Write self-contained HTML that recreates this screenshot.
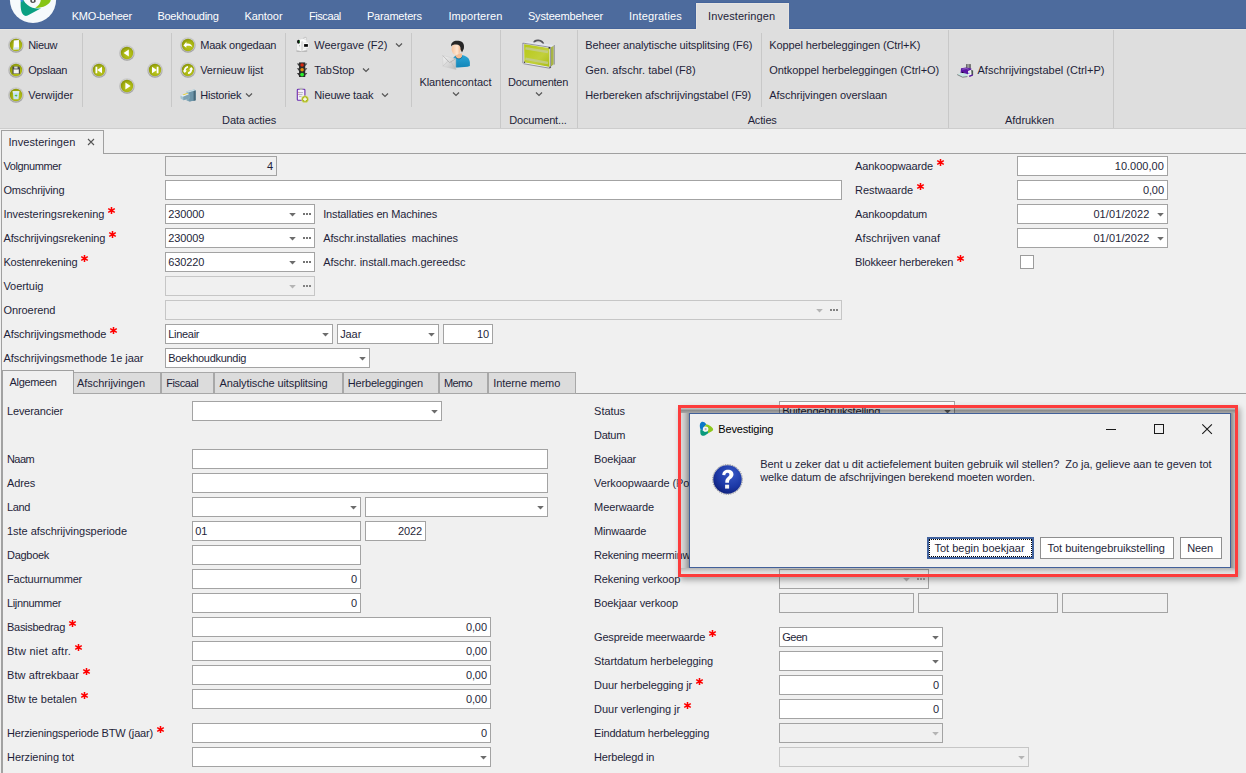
<!DOCTYPE html>
<html><head><meta charset="utf-8"><title>Investeringen</title><style>
html,body{margin:0;padding:0}
body{width:1246px;height:773px;position:relative;overflow:hidden;background:#f0f0f0;font-family:"Liberation Sans",sans-serif;font-size:11px;color:#1f1f3a}
.b{position:absolute;box-sizing:border-box;display:block}
.t{position:absolute;white-space:pre;line-height:14px;font-size:11px;font-family:"Liberation Sans",sans-serif}
</style></head><body>
<div class="b" style="left:0px;top:0px;width:1246px;height:29px;background:#4d6b9d;"></div>
<svg class="b" style="left:0;top:0" width="70" height="29" viewBox="0 0 70 29">
<circle cx="33" cy="-0.1" r="23.1" fill="#f6fafc"/>
<path d="M20.8 0C20.5 4 20.6 8 21.3 11C22.2 14.8 24.8 16.9 27.6 15.5L41.1 8.3C38 8.7 35 8.6 32.4 7.8C28.8 6.6 25.4 3.8 23.4 0Z" fill="#0aa082"/>
<path d="M35.2 7.8C38 8.2 42 7.6 45.6 5.8C48.4 4.4 50.4 2.2 50.8 0H40.8C40.6 3.2 38.4 6 35.2 7.8Z" fill="#86c414"/>
<path d="M20.6 0H23C22.6 0.9 22.4 1.7 22.4 2.6C21.4 2 20.8 1 20.6 0Z" fill="#3a8ee6"/>
<path d="M30.3 0H35.6V1.6C35.2 2.6 34.2 3 33 3C31.4 3 30.3 2.2 30.3 0.8Z" fill="#4a4a4a"/>
<path d="M31.9 0H34V1.2C33.6 1.7 33.2 1.8 32.7 1.8C32.2 1.8 31.9 1.5 31.9 1Z" fill="#f0f4f6"/>
</svg>
<div class="b" style="left:0px;top:28px;width:1246px;height:1px;background:#45649a;"></div>
<div class="b" style="left:0px;top:29px;width:1246px;height:99px;background:#dedede;"></div>
<div class="b" style="left:0px;top:29px;width:1246px;height:1px;background:#e6e4e1;"></div>
<div class="b" style="left:0px;top:128px;width:1246px;height:1px;background:#cdcdcd;"></div>
<div class="b" style="left:695px;top:3px;width:1px;height:26px;background:#45649a;"></div>
<div class="b" style="left:696px;top:2px;width:93px;height:1px;background:#45649a;"></div>
<div class="b" style="left:696px;top:3px;width:93px;height:27px;background:#dedede;border:1px solid #e6e4e1;border-bottom:none;"></div>
<span class="t" style="top:9px;letter-spacing:-0.297px;left:71.8px;color:#fff;">KMO-beheer</span>
<span class="t" style="top:9px;letter-spacing:-0.293px;left:157.5px;color:#fff;">Boekhouding</span>
<span class="t" style="top:9px;letter-spacing:-0.075px;left:244.5px;color:#fff;">Kantoor</span>
<span class="t" style="top:9px;letter-spacing:-0.406px;left:308.9px;color:#fff;">Fiscaal</span>
<span class="t" style="top:9px;letter-spacing:-0.185px;left:366.9px;color:#fff;">Parameters</span>
<span class="t" style="top:9px;letter-spacing:0.081px;left:448.4px;color:#fff;">Importeren</span>
<span class="t" style="top:9px;letter-spacing:-0.157px;left:527.9px;color:#fff;">Systeembeheer</span>
<span class="t" style="top:9px;letter-spacing:0.149px;left:629.0px;color:#fff;">Integraties</span>
<span class="t" style="top:9px;letter-spacing:0.074px;left:708.1px;">Investeringen</span>
<div class="b" style="left:82px;top:33px;width:1px;height:74px;background:#c8c8c8;"></div>
<div class="b" style="left:171px;top:33px;width:1px;height:74px;background:#c8c8c8;"></div>
<div class="b" style="left:285px;top:33px;width:1px;height:74px;background:#c8c8c8;"></div>
<div class="b" style="left:411px;top:33px;width:1px;height:74px;background:#c8c8c8;"></div>
<div class="b" style="left:761px;top:33px;width:1px;height:74px;background:#c8c8c8;"></div>
<div class="b" style="left:500px;top:30px;width:1px;height:98px;background:#c8c8c8;"></div>
<div class="b" style="left:577px;top:30px;width:1px;height:98px;background:#c8c8c8;"></div>
<div class="b" style="left:948px;top:30px;width:1px;height:98px;background:#c8c8c8;"></div>
<div class="b" style="left:1113px;top:30px;width:1px;height:98px;background:#c8c8c8;"></div>
<svg class="b" style="left:0;top:0" width="1246" height="130" viewBox="0 0 1246 130"><defs>
<radialGradient id="ol" cx="0.58" cy="0.62" r="0.62"><stop offset="0" stop-color="#bcc820"/><stop offset="0.6" stop-color="#a8b412"/><stop offset="1" stop-color="#8a960a"/></radialGradient>
<linearGradient id="rg" x1="0" y1="0" x2="0" y2="1"><stop offset="0" stop-color="#cacaca"/><stop offset="0.5" stop-color="#bcbcbc"/><stop offset="1" stop-color="#9e9e9e"/></linearGradient>
<linearGradient id="sk" x1="0" y1="0" x2="1" y2="0"><stop offset="0" stop-color="#f7c29c"/><stop offset="0.6" stop-color="#fde6d2"/><stop offset="1" stop-color="#f2b48a"/></linearGradient>
<linearGradient id="sh" x1="0" y1="0" x2="0" y2="1"><stop offset="0" stop-color="#2aa6d8"/><stop offset="1" stop-color="#1486b8"/></linearGradient>
<linearGradient id="env" x1="0" y1="0" x2="1" y2="1"><stop offset="0" stop-color="#f4f4f4"/><stop offset="1" stop-color="#bcbcbc"/></linearGradient>
<linearGradient id="cs" x1="0" y1="0" x2="1" y2="1"><stop offset="0" stop-color="#b6c814"/><stop offset="0.6" stop-color="#c2d03a"/><stop offset="1" stop-color="#a8ba10"/></linearGradient>
<linearGradient id="cab" x1="0" y1="0" x2="1" y2="1"><stop offset="0" stop-color="#a8ccd8"/><stop offset="1" stop-color="#5c8498"/></linearGradient>
</defs>
<g transform="translate(16 45)"><circle r="7.8" fill="url(#rg)"/><circle r="6.7" fill="#d8d8d8" opacity="0.55"/><circle r="6.2" fill="url(#ol)"/><path d="M-2.2 -4.6L2.9 -5L3.1 4.2L-2.6 4.6Z" fill="#fafcff"/><path d="M-2.5 2.6L3.05 2.3L3.1 4.2L-2.6 4.6Z" fill="#cfe3f2"/></g>
<g transform="translate(16 70)"><circle r="7.8" fill="url(#rg)"/><circle r="6.7" fill="#d8d8d8" opacity="0.55"/><circle r="6.2" fill="url(#ol)"/><path d="M-3.6 -3.4H3L4 -2.4V3.8H-3.6Z" fill="#4a4a4a"/><rect x="-2.4" y="-0.6" width="5.2" height="4" fill="#f4f4f4"/><rect x="-1.8" y="-3.4" width="3.4" height="2" fill="#d8d8d8"/></g>
<g transform="translate(16 95)"><circle r="7.8" fill="url(#rg)"/><circle r="6.7" fill="#d8d8d8" opacity="0.55"/><circle r="6.2" fill="url(#ol)"/><path d="M-3.2 -3.6H3.2L2.5 4.2H-2.5Z" fill="#c6e4f4"/><path d="M-3.4 -3.8H3.4V-2.6H-3.4Z" fill="#e8f4fb"/><path d="M-0.2 -0.8L1.6 0.6L-0.2 2V1.1H-1.2V0.1H-0.2Z" fill="#58c038"/></g>
<g transform="translate(127 53)"><circle r="7.8" fill="url(#rg)"/><circle r="6.7" fill="#d8d8d8" opacity="0.55"/><circle r="6.2" fill="url(#ol)"/><path d="M-3.4 0L1.8 -3.4V3.4Z" fill="#fff"/></g>
<g transform="translate(127 86)"><circle r="7.8" fill="url(#rg)"/><circle r="6.7" fill="#d8d8d8" opacity="0.55"/><circle r="6.2" fill="url(#ol)"/><path d="M3.6 0L-1.6 -3.4V3.4Z" fill="#fff"/></g>
<g transform="translate(99 70)"><circle r="7.8" fill="url(#rg)"/><circle r="6.7" fill="#d8d8d8" opacity="0.55"/><circle r="6.2" fill="url(#ol)"/><path d="M-3.5 -3.3H-1.7V3.3H-3.5Z" fill="#fff"/><path d="M-1.9 0L3 -3.3V3.3Z" fill="#fff"/></g>
<g transform="translate(155 70)"><circle r="7.8" fill="url(#rg)"/><circle r="6.7" fill="#d8d8d8" opacity="0.55"/><circle r="6.2" fill="url(#ol)"/><path d="M3.5 -3.3H1.7V3.3H3.5Z" fill="#fff"/><path d="M1.9 0L-3 -3.3V3.3Z" fill="#fff"/></g>
<g transform="translate(188 45)"><circle r="7.8" fill="url(#rg)"/><circle r="6.7" fill="#d8d8d8" opacity="0.55"/><circle r="6.2" fill="url(#ol)"/><path d="M-4.6 0.4L-1.6 -3.2V-1.5C1.6 -2 4 -0.4 4.4 2.4C3 0.9 1 0.6 -1.6 1V2.8Z" fill="#fff"/></g>
<g transform="translate(188 70)"><circle r="7.8" fill="url(#rg)"/><circle r="6.7" fill="#d8d8d8" opacity="0.55"/><circle r="6.2" fill="url(#ol)"/><path d="M-4.2 0.6C-4.2 -2 -2.4 -3.9 0 -4.1V-2.3C-1.3 -2.1 -2.3 -1 -2.3 0.4H-1L-3.2 3L-5.4 0.6Z" fill="#fff"/><path d="M4.2 -0.6C4.2 2 2.4 3.9 0 4.1V2.3C1.3 2.1 2.3 1 2.3 -0.4H1L3.2 -3L5.4 -0.6Z" fill="#fff"/></g>
<g>
<path d="M186.5 91.2L194.4 89.6L195.6 90.6V100.2L189.4 101.6L186.5 100.4Z" fill="url(#cab)"/>
<path d="M186.5 91.2L194.4 89.6L195.6 90.6L188.6 92.4Z" fill="#c4dce6"/>
<path d="M188.6 92.4L195.6 90.6V100.2L189.4 101.6Z" fill="#6c94a8"/><path d="M193.6 91.1L195.6 90.6V100.2L193.6 100.7Z" fill="#47687a"/>
<path d="M180.4 95.8L186.8 93.2L189.2 94.2L189.4 98.6L183.4 100.2L180.6 98.4Z" fill="#a4c4d2"/>
<path d="M180.4 95.8L186.8 93.2L189.2 94.2L183.2 96.8Z" fill="#e6eef2"/>
<path d="M182.6 94.6L187.2 92.9L188.3 93.4L183.8 95.3Z" fill="#e8d040"/>
<path d="M183.2 96.8L189.2 94.2L189.4 98.6L183.4 100.2Z" fill="#7ea2b4"/>
</g>
<g>
<ellipse cx="301.8" cy="50.9" rx="5.6" ry="0.9" fill="#adadad"/>
<path d="M302.6 40.2C302.8 37.4 304.6 36.5 306 37C307.1 37.4 307.3 39 306.9 40.6Z" fill="#c9c9c9"/>
<path d="M303.6 39.6C303.9 38.2 305 37.7 305.8 38C306.4 38.3 306.4 39.2 306.2 40Z" fill="#ededed"/>
<path d="M297 39.7L303.4 38.8L306.7 40.2V50L301.6 51.2L297 50.2Z" fill="#fbfbfb" stroke="#cdcdcd" stroke-width="0.35"/>
<path d="M301.3 41.4L302.7 41.1V50.6L301.3 50.9Z" fill="#d2d2d2"/>
<path d="M297.2 44.6L301 44.2V49.9L297.2 49.4Z" fill="#f4f4f4"/>
<path d="M299.1 45L299.8 45V46.4L299.1 46.2Z" fill="#a8a8a8"/>
<path d="M303.2 42.7L308.8 42.3V47.9L303.2 48.2Z" fill="#ffffff" stroke="#c6c6c6" stroke-width="0.3"/>
<path d="M304.1 44.1H307.9V46.8H304.1Z" fill="#060606"/>
<ellipse cx="298.5" cy="41.7" rx="1.5" ry="2" fill="#0c0c0c"/>
<ellipse cx="299.3" cy="41.7" rx="0.5" ry="1.3" fill="#1e8a2a"/>
</g>
<g>
<path d="M299 62.4H305.2V77H299Z" fill="#2c2c2c"/>
<path d="M296.9 63.4H299V66.2Z M296.9 68.2H299V71Z M296.9 73H299V75.8Z M307.3 63.4H305.2V66.2Z M307.3 68.2H305.2V71Z M307.3 73H305.2V75.8Z" fill="#3a3a3a"/>
<circle cx="302.1" cy="65.1" r="1.75" fill="#d82a10"/>
<circle cx="302.1" cy="69.8" r="1.75" fill="#e89010"/>
<circle cx="302.1" cy="74.6" r="1.9" fill="#2cf02c"/>
</g>
<g>
<rect x="297.3" y="89.2" width="7.6" height="11" rx="0.8" fill="#f4f0fa" stroke="#6a2cb0" stroke-width="1.1"/>
<rect x="299.6" y="87.8" width="3" height="2.2" fill="#b8b8b8"/>
<path d="M299 92.6H303M299 94.6H302.4M299 96.6H301.6" stroke="#9a9aa8" stroke-width="0.7"/>
<path d="M298.3 92.4h0.8M298.3 94.4h0.8" stroke="#d03030" stroke-width="0.7"/>
<circle cx="305" cy="99.2" r="3.5" fill="#aab616" stroke="#dfe6a0" stroke-width="0.6"/>
<path d="M303 99.2H307M305 97.2V101.2" stroke="#fff" stroke-width="1.3"/>
</g>
<g>
<path d="M451.2 67C451 61.5 452.6 56 457 55.2L461.4 55C466 55.6 469.6 58 469.9 62.5V66C466 67.6 455 67.8 451.2 67Z" fill="url(#sh)"/>
<path d="M455.6 53.4H462V56.6C461 59.2 457.4 59.4 455.6 57Z" fill="#f4bc94"/>
<path d="M455.3 56.4C456.8 59.6 460.6 59.8 462.3 56.6" fill="none" stroke="#0e5c80" stroke-width="0.7"/>
<ellipse cx="456.2" cy="49.3" rx="4.6" ry="5.7" fill="url(#sk)"/>
<path d="M451.1 46.6C450.6 42 454.6 40.2 458.4 40.8C462.6 41 464.6 44 463.9 48.2C463.6 49.6 462.8 50.2 462 52.6L460.6 49.6C460.8 46.4 459.2 44.6 456 44.6C453.6 44.6 452 45.2 451.1 46.6Z" fill="#262626"/>
<path d="M442.8 55.6L455.8 58.8V69.6L443 66.2Z" fill="url(#env)" stroke="#c8c8c8" stroke-width="0.4"/>
<path d="M442.8 55.6L449.6 62.6L455.8 58.8" fill="none" stroke="#a8a8a8" stroke-width="0.7"/>
<path d="M443 66.2L448 61.2M455.8 69.6L451 61.8" stroke="#b8b8b8" stroke-width="0.5"/>
</g>
<g>
<path d="M533.6 43.8C534 40.8 535.6 40.2 538.4 40.4C541.6 40.6 543 41.8 543.5 44.8" fill="none" stroke="#55555c" stroke-width="1.9"/>
<path d="M550.1 47.5L554 45.1V64.5L550.1 67.6Z" fill="#a9b644" stroke="#dcdce6" stroke-width="0.8"/>
<path d="M523.4 43.3L527.6 41.4L554 45.1L550.1 47.5Z" fill="#e4e6ee"/>
<path d="M523.4 43.3L550.1 47.5V67.6L523.7 63Z" fill="url(#cs)" stroke="#e8e8f2" stroke-width="1.4" stroke-linejoin="round"/>
<path d="M522.8 43.1L550.4 47.3M550.6 47.2V68M522.9 43V63.2M523.4 63.7L550.2 68.3" stroke="#5c5c6a" stroke-width="0.6" fill="none"/>
<path d="M525.4 48.2L548 52M525.4 58.8L548 63" stroke="#c4cc8c" stroke-width="2.6" opacity="0.85"/>
<path d="M554.3 45V64.6" stroke="#5c5c6a" stroke-width="0.6"/>
<circle cx="549.3" cy="47.8" r="0.9" fill="#2a2a30"/><circle cx="524.5" cy="62.2" r="0.7" fill="#3a3a40"/><circle cx="550" cy="67.3" r="0.8" fill="#3a3a40"/>
</g>
<g>
<path d="M966 64.1H970.9V68.6H966Z" fill="#6a6a6a"/>
<path d="M967.2 64.1H969.2V68.6H967.2Z" fill="#9a9a9a"/>
<path d="M961 68.2L966 67.4L971.4 68.4L971.2 70.6L968 74.2L960.6 73Z" fill="#5a16a2"/>
<path d="M962.4 69.2L966.2 68.6L968.6 69.2" stroke="#b8a0dc" stroke-width="0.6" fill="none"/>
<path d="M968 71L971.6 69.4L973.1 70.6V75L968.6 76.8L968 76Z" fill="#eef0f0"/>
<path d="M971.2 69.8L973.1 70.6V75L971.6 75.6Z" fill="#4a5a50"/>
<path d="M968.6 75.8L973 74.2V75.6L969.6 76.9Z" fill="#5a16a2"/>
<path d="M968.2 72.8H969.4V73.8H968.2Z" fill="#3a5ae0"/>
<path d="M957.2 74.4L961.6 72.8L967.2 74L967.4 76.4L962.6 77.2Z" fill="#c6e6e4"/>
<path d="M957.2 74.6L962.6 77.2L967.4 76.6" stroke="#5a5a5a" stroke-width="0.7" fill="none"/>
<ellipse cx="962.6" cy="72.3" rx="1" ry="0.6" fill="#14082a"/>
</g></svg>
<span class="t" style="top:38px;letter-spacing:-0.313px;left:28.2px;">Nieuw</span>
<span class="t" style="top:63px;letter-spacing:-0.281px;left:28.2px;">Opslaan</span>
<span class="t" style="top:88px;letter-spacing:-0.027px;left:28.2px;">Verwijder</span>
<span class="t" style="top:38px;letter-spacing:-0.222px;left:200.2px;">Maak ongedaan</span>
<span class="t" style="top:63px;letter-spacing:-0.085px;left:200.2px;">Vernieuw lijst</span>
<span class="t" style="top:88px;letter-spacing:-0.198px;left:200.2px;">Historiek</span>
<svg class="b" style="left:245px;top:92px" width="8" height="6" viewBox="-4 -3 8 6"><path d="M-3 -1.5L0 1.5L3 -1.5" fill="none" stroke="#555" stroke-width="1.2"/></svg>
<span class="t" style="top:38px;letter-spacing:-0.012px;left:314.3px;">Weergave (F2)</span>
<svg class="b" style="left:395px;top:42px" width="8" height="6" viewBox="-4 -3 8 6"><path d="M-3 -1.5L0 1.5L3 -1.5" fill="none" stroke="#555" stroke-width="1.2"/></svg>
<span class="t" style="top:63px;letter-spacing:-0.052px;left:314.3px;">TabStop</span>
<svg class="b" style="left:361.6px;top:67px" width="8" height="6" viewBox="-4 -3 8 6"><path d="M-3 -1.5L0 1.5L3 -1.5" fill="none" stroke="#555" stroke-width="1.2"/></svg>
<span class="t" style="top:88px;letter-spacing:-0.139px;left:314.3px;">Nieuwe taak</span>
<svg class="b" style="left:381px;top:92px" width="8" height="6" viewBox="-4 -3 8 6"><path d="M-3 -1.5L0 1.5L3 -1.5" fill="none" stroke="#555" stroke-width="1.2"/></svg>
<span class="t" style="top:75px;letter-spacing:-0.055px;left:419.4px;">Klantencontact</span>
<svg class="b" style="left:451.9px;top:91px" width="8" height="6" viewBox="-4 -3 8 6"><path d="M-3 -1.5L0 1.5L3 -1.5" fill="none" stroke="#555" stroke-width="1.2"/></svg>
<span class="t" style="top:75px;letter-spacing:-0.237px;left:508.1px;">Documenten</span>
<svg class="b" style="left:534.9px;top:91px" width="8" height="6" viewBox="-4 -3 8 6"><path d="M-3 -1.5L0 1.5L3 -1.5" fill="none" stroke="#555" stroke-width="1.2"/></svg>
<span class="t" style="top:38px;letter-spacing:-0.116px;left:585.2px;">Beheer analytische uitsplitsing (F6)</span>
<span class="t" style="top:63px;letter-spacing:0.046px;left:585.2px;">Gen. afschr. tabel (F8)</span>
<span class="t" style="top:88px;letter-spacing:-0.062px;left:585.2px;">Herbereken afschrijvingstabel (F9)</span>
<span class="t" style="top:38px;letter-spacing:-0.113px;left:769.2px;">Koppel herbeleggingen (Ctrl+K)</span>
<span class="t" style="top:63px;letter-spacing:-0.046px;left:769.2px;">Ontkoppel herbeleggingen (Ctrl+O)</span>
<span class="t" style="top:88px;letter-spacing:-0.051px;left:769.2px;">Afschrijvingen overslaan</span>
<span class="t" style="top:63px;letter-spacing:0.006px;left:977.5px;">Afschrijvingstabel (Ctrl+P)</span>
<span class="t" style="top:113px;letter-spacing:-0.093px;left:222.1px;">Data acties</span>
<span class="t" style="top:113px;letter-spacing:-0.164px;left:509.2px;">Document...</span>
<span class="t" style="top:113px;letter-spacing:-0.159px;left:747.7px;">Acties</span>
<span class="t" style="top:113px;letter-spacing:-0.058px;left:1005.1px;">Afdrukken</span>
<div class="b" style="left:103px;top:153px;width:1143px;height:1px;background:#a0a0a0;"></div>
<div class="b" style="left:1px;top:130px;width:103px;height:24px;background:#f0f0f0;border:1px solid #a0a0a0;border-bottom:none;"></div>
<div class="b" style="left:1px;top:153px;width:1px;height:620px;background:#a0a0a0;"></div>
<span class="t" style="top:135px;letter-spacing:0.074px;left:8.4px;">Investeringen</span>
<svg class="b" style="left:87px;top:138px" width="8" height="8" viewBox="0 0 8 8"><path d="M1 1L7 7M7 1L1 7" stroke="#555" stroke-width="1.1" fill="none"/></svg>
<span class="t" style="top:159px;letter-spacing:-0.375px;left:3.4px;">Volgnummer</span>
<div class="b" style="left:165px;top:156px;width:112px;height:20px;background:#f0f0f0;border:1px solid #a3a3a3;"></div>
<span class="t" style="top:159px;letter-spacing:-0.117px;right:973.1px;">4</span>
<span class="t" style="top:183px;letter-spacing:-0.214px;left:3.4px;">Omschrijving</span>
<div class="b" style="left:165px;top:180px;width:677px;height:20px;background:#fff;border:1px solid #a3a3a3;"></div>
<span class="t" style="top:207px;letter-spacing:-0.025px;left:3.4px;">Investeringsrekening</span>
<svg class="b" style="left:106.9px;top:206.0px" width="9" height="9" viewBox="-4.5 -4.5 9 9"><g stroke="#f00" stroke-width="1.55" stroke-linecap="butt"><path d="M0 -3.6V3.6M-3.3 -1.9L3.3 1.9M-3.3 1.9L3.3 -1.9"/></g></svg>
<div class="b" style="left:165px;top:204px;width:150px;height:20px;background:#fff;border:1px solid #a3a3a3;"></div>
<svg class="b" style="left:303px;top:213px" width="8" height="2"><g fill="#747474"><rect x="0" y="0" width="2" height="2"/><rect x="3" y="0" width="2" height="2"/><rect x="6" y="0" width="2" height="2"/></g></svg>
<svg class="b" style="left:288.5px;top:212.6px" width="7" height="4"><path d="M0.2 0H6.8L3.5 3.5Z" fill="#6c6c6c"/></svg>
<span class="t" style="top:207px;letter-spacing:-0.117px;left:168.2px;">230000</span>
<span class="t" style="top:207px;letter-spacing:-0.141px;left:323.2px;">Installaties en Machines</span>
<span class="t" style="top:231px;letter-spacing:-0.092px;left:3.4px;">Afschrijvingsrekening</span>
<svg class="b" style="left:107.9px;top:230.0px" width="9" height="9" viewBox="-4.5 -4.5 9 9"><g stroke="#f00" stroke-width="1.55" stroke-linecap="butt"><path d="M0 -3.6V3.6M-3.3 -1.9L3.3 1.9M-3.3 1.9L3.3 -1.9"/></g></svg>
<div class="b" style="left:165px;top:228px;width:150px;height:20px;background:#fff;border:1px solid #a3a3a3;"></div>
<svg class="b" style="left:303px;top:237px" width="8" height="2"><g fill="#747474"><rect x="0" y="0" width="2" height="2"/><rect x="3" y="0" width="2" height="2"/><rect x="6" y="0" width="2" height="2"/></g></svg>
<svg class="b" style="left:288.5px;top:236.6px" width="7" height="4"><path d="M0.2 0H6.8L3.5 3.5Z" fill="#6c6c6c"/></svg>
<span class="t" style="top:231px;letter-spacing:-0.117px;left:168.2px;">230009</span>
<span class="t" style="top:231px;letter-spacing:-0.118px;left:323.2px;">Afschr.installaties  machines</span>
<span class="t" style="top:255px;letter-spacing:-0.174px;left:3.4px;">Kostenrekening</span>
<svg class="b" style="left:79.9px;top:254.0px" width="9" height="9" viewBox="-4.5 -4.5 9 9"><g stroke="#f00" stroke-width="1.55" stroke-linecap="butt"><path d="M0 -3.6V3.6M-3.3 -1.9L3.3 1.9M-3.3 1.9L3.3 -1.9"/></g></svg>
<div class="b" style="left:165px;top:252px;width:150px;height:20px;background:#fff;border:1px solid #a3a3a3;"></div>
<svg class="b" style="left:303px;top:261px" width="8" height="2"><g fill="#747474"><rect x="0" y="0" width="2" height="2"/><rect x="3" y="0" width="2" height="2"/><rect x="6" y="0" width="2" height="2"/></g></svg>
<svg class="b" style="left:288.5px;top:260.6px" width="7" height="4"><path d="M0.2 0H6.8L3.5 3.5Z" fill="#6c6c6c"/></svg>
<span class="t" style="top:255px;letter-spacing:-0.117px;left:168.2px;">630220</span>
<span class="t" style="top:255px;letter-spacing:-0.028px;left:323.2px;">Afschr. install.mach.gereedsc</span>
<span class="t" style="top:279px;letter-spacing:-0.045px;left:3.4px;">Voertuig</span>
<div class="b" style="left:165px;top:276px;width:150px;height:20px;background:#f0f0f0;border:1px solid #c6c6c6;"></div>
<svg class="b" style="left:303px;top:285px" width="8" height="2"><g fill="#828282"><rect x="0" y="0" width="2" height="2"/><rect x="3" y="0" width="2" height="2"/><rect x="6" y="0" width="2" height="2"/></g></svg>
<svg class="b" style="left:288.5px;top:284.6px" width="7" height="4"><path d="M0.2 0H6.8L3.5 3.5Z" fill="#b4b4b4"/></svg>
<span class="t" style="top:303px;letter-spacing:-0.065px;left:3.4px;">Onroerend</span>
<div class="b" style="left:165px;top:300px;width:677px;height:20px;background:#f0f0f0;border:1px solid #c6c6c6;"></div>
<svg class="b" style="left:830px;top:309px" width="8" height="2"><g fill="#828282"><rect x="0" y="0" width="2" height="2"/><rect x="3" y="0" width="2" height="2"/><rect x="6" y="0" width="2" height="2"/></g></svg>
<svg class="b" style="left:815.5px;top:308.6px" width="7" height="4"><path d="M0.2 0H6.8L3.5 3.5Z" fill="#b4b4b4"/></svg>
<span class="t" style="top:327px;letter-spacing:-0.077px;left:3.4px;">Afschrijvingsmethode</span>
<svg class="b" style="left:108.9px;top:326.0px" width="9" height="9" viewBox="-4.5 -4.5 9 9"><g stroke="#f00" stroke-width="1.55" stroke-linecap="butt"><path d="M0 -3.6V3.6M-3.3 -1.9L3.3 1.9M-3.3 1.9L3.3 -1.9"/></g></svg>
<div class="b" style="left:165px;top:324px;width:168px;height:20px;background:#fff;border:1px solid #a3a3a3;"></div>
<svg class="b" style="left:321.5px;top:332.6px" width="7" height="4"><path d="M0.2 0H6.8L3.5 3.5Z" fill="#6c6c6c"/></svg>
<span class="t" style="top:327px;letter-spacing:-0.288px;left:168.2px;">Lineair</span>
<div class="b" style="left:337px;top:324px;width:102px;height:20px;background:#fff;border:1px solid #a3a3a3;"></div>
<svg class="b" style="left:427.5px;top:332.6px" width="7" height="4"><path d="M0.2 0H6.8L3.5 3.5Z" fill="#6c6c6c"/></svg>
<span class="t" style="top:327px;letter-spacing:-0.099px;left:340.2px;">Jaar</span>
<div class="b" style="left:443px;top:324px;width:50px;height:20px;background:#fff;border:1px solid #a3a3a3;"></div>
<span class="t" style="top:327px;letter-spacing:-0.117px;right:757.1px;">10</span>
<span class="t" style="top:351px;letter-spacing:-0.044px;left:3.4px;">Afschrijvingsmethode 1e jaar</span>
<div class="b" style="left:165px;top:348px;width:205px;height:20px;background:#fff;border:1px solid #a3a3a3;"></div>
<svg class="b" style="left:358.5px;top:356.6px" width="7" height="4"><path d="M0.2 0H6.8L3.5 3.5Z" fill="#6c6c6c"/></svg>
<span class="t" style="top:351px;letter-spacing:-0.282px;left:168.2px;">Boekhoudkundig</span>
<span class="t" style="top:159px;letter-spacing:-0.115px;left:855.1px;">Aankoopwaarde</span>
<svg class="b" style="left:935.6px;top:158.0px" width="9" height="9" viewBox="-4.5 -4.5 9 9"><g stroke="#f00" stroke-width="1.55" stroke-linecap="butt"><path d="M0 -3.6V3.6M-3.3 -1.9L3.3 1.9M-3.3 1.9L3.3 -1.9"/></g></svg>
<div class="b" style="left:1017px;top:156px;width:151px;height:20px;background:#fff;border:1px solid #a3a3a3;"></div>
<span class="t" style="top:159px;letter-spacing:0.007px;right:82.2px;">10.000,00</span>
<span class="t" style="top:183px;letter-spacing:-0.069px;left:855.1px;">Restwaarde</span>
<svg class="b" style="left:915.6px;top:182.0px" width="9" height="9" viewBox="-4.5 -4.5 9 9"><g stroke="#f00" stroke-width="1.55" stroke-linecap="butt"><path d="M0 -3.6V3.6M-3.3 -1.9L3.3 1.9M-3.3 1.9L3.3 -1.9"/></g></svg>
<div class="b" style="left:1017px;top:180px;width:151px;height:20px;background:#fff;border:1px solid #a3a3a3;"></div>
<span class="t" style="top:183px;letter-spacing:-0.102px;right:82.1px;">0,00</span>
<span class="t" style="top:207px;letter-spacing:-0.166px;left:855.1px;">Aankoopdatum</span>
<div class="b" style="left:1017px;top:204px;width:151px;height:20px;background:#fff;border:1px solid #a3a3a3;"></div>
<svg class="b" style="left:1156.5px;top:212.6px" width="7" height="4"><path d="M0.2 0H6.8L3.5 3.5Z" fill="#6c6c6c"/></svg>
<span class="t" style="top:207px;letter-spacing:0.095px;right:96.6px;">01/01/2022</span>
<span class="t" style="top:231px;letter-spacing:0.073px;left:855.1px;">Afschrijven vanaf</span>
<div class="b" style="left:1017px;top:228px;width:151px;height:20px;background:#fff;border:1px solid #a3a3a3;"></div>
<svg class="b" style="left:1156.5px;top:236.6px" width="7" height="4"><path d="M0.2 0H6.8L3.5 3.5Z" fill="#6c6c6c"/></svg>
<span class="t" style="top:231px;letter-spacing:0.095px;right:96.6px;">01/01/2022</span>
<span class="t" style="top:255px;letter-spacing:-0.184px;left:855.1px;">Blokkeer herbereken</span>
<svg class="b" style="left:955.6px;top:254.0px" width="9" height="9" viewBox="-4.5 -4.5 9 9"><g stroke="#f00" stroke-width="1.55" stroke-linecap="butt"><path d="M0 -3.6V3.6M-3.3 -1.9L3.3 1.9M-3.3 1.9L3.3 -1.9"/></g></svg>
<div class="b" style="left:1020px;top:255px;width:14px;height:14px;background:#fff;border:1px solid #9b9b9b;"></div>
<div class="b" style="left:1px;top:393px;width:1245px;height:1px;background:#a0a0a0;"></div>
<div class="b" style="left:73px;top:372px;width:88px;height:22px;background:#dcdcdc;border:1px solid #a8a8a8;"></div>
<span class="t" style="top:376px;letter-spacing:-0.034px;left:77.0px;">Afschrijvingen</span>
<div class="b" style="left:161px;top:372px;width:53px;height:22px;background:#dcdcdc;border:1px solid #a8a8a8;"></div>
<span class="t" style="top:376px;letter-spacing:-0.406px;left:166.2px;">Fiscaal</span>
<div class="b" style="left:214px;top:372px;width:129px;height:22px;background:#dcdcdc;border:1px solid #a8a8a8;"></div>
<span class="t" style="top:376px;letter-spacing:-0.111px;left:219.5px;">Analytische uitsplitsing</span>
<div class="b" style="left:343px;top:372px;width:96px;height:22px;background:#dcdcdc;border:1px solid #a8a8a8;"></div>
<span class="t" style="top:376px;letter-spacing:-0.190px;left:347.8px;">Herbeleggingen</span>
<div class="b" style="left:439px;top:372px;width:49px;height:22px;background:#dcdcdc;border:1px solid #a8a8a8;"></div>
<span class="t" style="top:376px;letter-spacing:-0.640px;left:444.1px;">Memo</span>
<div class="b" style="left:488px;top:372px;width:88px;height:22px;background:#dcdcdc;border:1px solid #a8a8a8;"></div>
<span class="t" style="top:376px;letter-spacing:-0.072px;left:493.2px;">Interne memo</span>
<div class="b" style="left:1px;top:370px;width:73px;height:24px;background:#f0f0f0;border:1px solid #a0a0a0;border-bottom:none;border-left:2px solid #a2a2a2"></div>
<div class="b" style="left:1px;top:393px;width:2px;height:380px;background:#a2a2a2;"></div>
<span class="t" style="top:375px;letter-spacing:-0.316px;left:9.5px;">Algemeen</span>
<span class="t" style="top:404px;letter-spacing:-0.134px;left:7.0px;">Leverancier</span>
<div class="b" style="left:192px;top:401px;width:250px;height:20px;background:#fff;border:1px solid #a3a3a3;"></div>
<svg class="b" style="left:430.5px;top:409.6px" width="7" height="4"><path d="M0.2 0H6.8L3.5 3.5Z" fill="#6c6c6c"/></svg>
<span class="t" style="top:452px;letter-spacing:-0.585px;left:7.0px;">Naam</span>
<div class="b" style="left:192px;top:449px;width:356px;height:20px;background:#fff;border:1px solid #a3a3a3;"></div>
<span class="t" style="top:476px;letter-spacing:-0.147px;left:7.0px;">Adres</span>
<div class="b" style="left:192px;top:473px;width:356px;height:20px;background:#fff;border:1px solid #a3a3a3;"></div>
<span class="t" style="top:500px;letter-spacing:-0.367px;left:7.0px;">Land</span>
<div class="b" style="left:192px;top:497px;width:169px;height:20px;background:#fff;border:1px solid #a3a3a3;"></div>
<svg class="b" style="left:349.5px;top:505.6px" width="7" height="4"><path d="M0.2 0H6.8L3.5 3.5Z" fill="#6c6c6c"/></svg>
<div class="b" style="left:365px;top:497px;width:183px;height:20px;background:#fff;border:1px solid #a3a3a3;"></div>
<svg class="b" style="left:536.5px;top:505.6px" width="7" height="4"><path d="M0.2 0H6.8L3.5 3.5Z" fill="#6c6c6c"/></svg>
<span class="t" style="top:524px;letter-spacing:-0.042px;left:7.0px;">1ste afschrijvingsperiode</span>
<div class="b" style="left:192px;top:521px;width:169px;height:20px;background:#fff;border:1px solid #a3a3a3;"></div>
<span class="t" style="top:524px;letter-spacing:-0.117px;left:195.2px;">01</span>
<div class="b" style="left:365px;top:521px;width:61px;height:20px;background:#fff;border:1px solid #a3a3a3;"></div>
<span class="t" style="top:524px;letter-spacing:-0.117px;right:824.1px;">2022</span>
<span class="t" style="top:548px;letter-spacing:-0.290px;left:7.0px;">Dagboek</span>
<div class="b" style="left:192px;top:545px;width:169px;height:20px;background:#fff;border:1px solid #a3a3a3;"></div>
<span class="t" style="top:572px;letter-spacing:-0.202px;left:7.0px;">Factuurnummer</span>
<div class="b" style="left:192px;top:569px;width:169px;height:20px;background:#fff;border:1px solid #a3a3a3;"></div>
<span class="t" style="top:572px;letter-spacing:-0.117px;right:889.1px;">0</span>
<span class="t" style="top:596px;letter-spacing:-0.346px;left:7.0px;">Lijnnummer</span>
<div class="b" style="left:192px;top:593px;width:169px;height:20px;background:#fff;border:1px solid #a3a3a3;"></div>
<span class="t" style="top:596px;letter-spacing:-0.117px;right:889.1px;">0</span>
<span class="t" style="top:620px;letter-spacing:-0.286px;left:7.0px;">Basisbedrag</span>
<svg class="b" style="left:67.5px;top:619.0px" width="9" height="9" viewBox="-4.5 -4.5 9 9"><g stroke="#f00" stroke-width="1.55" stroke-linecap="butt"><path d="M0 -3.6V3.6M-3.3 -1.9L3.3 1.9M-3.3 1.9L3.3 -1.9"/></g></svg>
<div class="b" style="left:192px;top:617px;width:299px;height:20px;background:#fff;border:1px solid #a3a3a3;"></div>
<span class="t" style="top:620px;letter-spacing:-0.102px;right:759.1px;">0,00</span>
<span class="t" style="top:644px;letter-spacing:0.248px;left:7.0px;">Btw niet aftr.</span>
<svg class="b" style="left:73.5px;top:643.0px" width="9" height="9" viewBox="-4.5 -4.5 9 9"><g stroke="#f00" stroke-width="1.55" stroke-linecap="butt"><path d="M0 -3.6V3.6M-3.3 -1.9L3.3 1.9M-3.3 1.9L3.3 -1.9"/></g></svg>
<div class="b" style="left:192px;top:641px;width:299px;height:20px;background:#fff;border:1px solid #a3a3a3;"></div>
<span class="t" style="top:644px;letter-spacing:-0.102px;right:759.1px;">0,00</span>
<span class="t" style="top:668px;letter-spacing:0.077px;left:7.0px;">Btw aftrekbaar</span>
<svg class="b" style="left:81.5px;top:667.0px" width="9" height="9" viewBox="-4.5 -4.5 9 9"><g stroke="#f00" stroke-width="1.55" stroke-linecap="butt"><path d="M0 -3.6V3.6M-3.3 -1.9L3.3 1.9M-3.3 1.9L3.3 -1.9"/></g></svg>
<div class="b" style="left:192px;top:665px;width:299px;height:20px;background:#fff;border:1px solid #a3a3a3;"></div>
<span class="t" style="top:668px;letter-spacing:-0.102px;right:759.1px;">0,00</span>
<span class="t" style="top:692px;letter-spacing:0.021px;left:7.0px;">Btw te betalen</span>
<svg class="b" style="left:79.5px;top:691.0px" width="9" height="9" viewBox="-4.5 -4.5 9 9"><g stroke="#f00" stroke-width="1.55" stroke-linecap="butt"><path d="M0 -3.6V3.6M-3.3 -1.9L3.3 1.9M-3.3 1.9L3.3 -1.9"/></g></svg>
<div class="b" style="left:192px;top:689px;width:299px;height:20px;background:#fff;border:1px solid #a3a3a3;"></div>
<span class="t" style="top:692px;letter-spacing:-0.102px;right:759.1px;">0,00</span>
<span class="t" style="top:726px;letter-spacing:-0.172px;left:7.0px;">Herzieningsperiode BTW (jaar)</span>
<svg class="b" style="left:155.5px;top:725.0px" width="9" height="9" viewBox="-4.5 -4.5 9 9"><g stroke="#f00" stroke-width="1.55" stroke-linecap="butt"><path d="M0 -3.6V3.6M-3.3 -1.9L3.3 1.9M-3.3 1.9L3.3 -1.9"/></g></svg>
<div class="b" style="left:192px;top:723px;width:299px;height:20px;background:#fff;border:1px solid #a3a3a3;"></div>
<span class="t" style="top:726px;letter-spacing:-0.117px;right:759.1px;">0</span>
<span class="t" style="top:750px;letter-spacing:-0.062px;left:7.0px;">Herziening tot</span>
<div class="b" style="left:192px;top:747px;width:299px;height:20px;background:#fff;border:1px solid #a3a3a3;"></div>
<svg class="b" style="left:479.5px;top:755.6px" width="7" height="4"><path d="M0.2 0H6.8L3.5 3.5Z" fill="#6c6c6c"/></svg>
<span class="t" style="top:404px;letter-spacing:-0.031px;left:594.1px;">Status</span>
<div class="b" style="left:779px;top:401px;width:176px;height:20px;background:#fff;border:1px solid #a3a3a3;"></div>
<svg class="b" style="left:943.5px;top:409.6px" width="7" height="4"><path d="M0.2 0H6.8L3.5 3.5Z" fill="#6c6c6c"/></svg>
<span class="t" style="top:404px;letter-spacing:-0.167px;left:782.2px;">Buitengebruikstelling</span>
<span class="t" style="top:428px;letter-spacing:-0.279px;left:594.1px;">Datum</span>
<span class="t" style="top:452px;letter-spacing:-0.177px;left:594.1px;">Boekjaar</span>
<span class="t" style="top:476px;letter-spacing:-0.079px;left:594.1px;">Verkoopwaarde (Positief)</span>
<span class="t" style="top:500px;letter-spacing:-0.113px;left:594.1px;">Meerwaarde</span>
<span class="t" style="top:524px;letter-spacing:-0.200px;left:594.1px;">Minwaarde</span>
<span class="t" style="top:548px;letter-spacing:-0.245px;left:594.1px;">Rekening meerminwaarde</span>
<span class="t" style="top:572px;letter-spacing:-0.166px;left:594.1px;">Rekening verkoop</span>
<div class="b" style="left:779px;top:569px;width:150px;height:20px;background:#f0f0f0;border:1px solid #a3a3a3;"></div>
<svg class="b" style="left:917px;top:578px" width="8" height="2"><g fill="#a4a4a4"><rect x="0" y="0" width="2" height="2"/><rect x="3" y="0" width="2" height="2"/><rect x="6" y="0" width="2" height="2"/></g></svg>
<svg class="b" style="left:902.5px;top:577.6px" width="7" height="4"><path d="M0.2 0H6.8L3.5 3.5Z" fill="#b4b4b4"/></svg>
<span class="t" style="top:596px;letter-spacing:-0.100px;left:594.1px;">Boekjaar verkoop</span>
<div class="b" style="left:779px;top:593px;width:135px;height:20px;background:#f0f0f0;border:1px solid #a3a3a3;"></div>
<div class="b" style="left:918px;top:593px;width:140px;height:20px;background:#f0f0f0;border:1px solid #a3a3a3;"></div>
<div class="b" style="left:1062px;top:593px;width:106px;height:20px;background:#f0f0f0;border:1px solid #a3a3a3;"></div>
<span class="t" style="top:630px;letter-spacing:-0.197px;left:594.1px;">Gespreide meerwaarde</span>
<svg class="b" style="left:707.6px;top:629.0px" width="9" height="9" viewBox="-4.5 -4.5 9 9"><g stroke="#f00" stroke-width="1.55" stroke-linecap="butt"><path d="M0 -3.6V3.6M-3.3 -1.9L3.3 1.9M-3.3 1.9L3.3 -1.9"/></g></svg>
<div class="b" style="left:779px;top:627px;width:164px;height:20px;background:#fff;border:1px solid #a3a3a3;"></div>
<svg class="b" style="left:931.5px;top:635.6px" width="7" height="4"><path d="M0.2 0H6.8L3.5 3.5Z" fill="#6c6c6c"/></svg>
<span class="t" style="top:630px;letter-spacing:-0.477px;left:782.2px;">Geen</span>
<span class="t" style="top:654px;letter-spacing:-0.064px;left:594.1px;">Startdatum herbelegging</span>
<div class="b" style="left:779px;top:651px;width:164px;height:20px;background:#fff;border:1px solid #a3a3a3;"></div>
<svg class="b" style="left:931.5px;top:659.6px" width="7" height="4"><path d="M0.2 0H6.8L3.5 3.5Z" fill="#6c6c6c"/></svg>
<span class="t" style="top:678px;letter-spacing:-0.083px;left:594.1px;">Duur herbelegging jr</span>
<svg class="b" style="left:694.6px;top:677.0px" width="9" height="9" viewBox="-4.5 -4.5 9 9"><g stroke="#f00" stroke-width="1.55" stroke-linecap="butt"><path d="M0 -3.6V3.6M-3.3 -1.9L3.3 1.9M-3.3 1.9L3.3 -1.9"/></g></svg>
<div class="b" style="left:779px;top:675px;width:164px;height:20px;background:#fff;border:1px solid #a3a3a3;"></div>
<span class="t" style="top:678px;letter-spacing:-0.117px;right:307.1px;">0</span>
<span class="t" style="top:702px;letter-spacing:-0.045px;left:594.1px;">Duur verlenging jr</span>
<svg class="b" style="left:682.6px;top:701.0px" width="9" height="9" viewBox="-4.5 -4.5 9 9"><g stroke="#f00" stroke-width="1.55" stroke-linecap="butt"><path d="M0 -3.6V3.6M-3.3 -1.9L3.3 1.9M-3.3 1.9L3.3 -1.9"/></g></svg>
<div class="b" style="left:779px;top:699px;width:164px;height:20px;background:#fff;border:1px solid #a3a3a3;"></div>
<span class="t" style="top:702px;letter-spacing:-0.117px;right:307.1px;">0</span>
<span class="t" style="top:726px;letter-spacing:-0.193px;left:594.1px;">Einddatum herbelegging</span>
<div class="b" style="left:779px;top:723px;width:164px;height:20px;background:#f0f0f0;border:1px solid #a3a3a3;"></div>
<svg class="b" style="left:931.5px;top:731.6px" width="7" height="4"><path d="M0.2 0H6.8L3.5 3.5Z" fill="#b4b4b4"/></svg>
<span class="t" style="top:750px;letter-spacing:-0.198px;left:594.1px;">Herbelegd in</span>
<div class="b" style="left:779px;top:747px;width:250px;height:20px;background:#f0f0f0;border:1px solid #c6c6c6;"></div>
<svg class="b" style="left:1017.5px;top:755.6px" width="7" height="4"><path d="M0.2 0H6.8L3.5 3.5Z" fill="#b4b4b4"/></svg>
<div class="b" style="left:678px;top:405px;width:560px;height:172px;border:3px solid #fd3c3c;box-shadow:2px 3px 6px rgba(0,0,0,0.33), -1px 0 3px rgba(255,255,255,0.45);"></div>
<div class="b" style="left:681px;top:408px;width:554px;height:5px;background:linear-gradient(to bottom,rgba(0,0,0,0.17) 0,rgba(0,0,0,0.41) 50%,rgba(0,0,0,0.31) 100%)"></div>
<div class="b" style="left:681px;top:568px;width:554px;height:6px;background:linear-gradient(to bottom,rgba(0,0,0,0.24) 0,rgba(0,0,0,0.10) 60%,rgba(0,10,10,0.05) 100%)"></div>
<div class="b" style="left:681px;top:413px;width:8px;height:155px;background:linear-gradient(to right,rgba(0,0,0,0.09) 0,rgba(0,0,0,0.19) 50%,rgba(0,0,0,0.38) 100%)"></div>
<div class="b" style="left:1231px;top:413px;width:4px;height:155px;background:linear-gradient(to right,rgba(0,0,0,0.42) 0,rgba(0,0,0,0.22) 100%)"></div>
<div class="b" style="left:689px;top:413px;width:542px;height:155px;background:#f0f0f0;border:1px solid #41609a"></div>
<svg class="b" style="left:699px;top:421px" width="15" height="16" viewBox="0 0 15 16">
<path d="M2.2 1.2C3.6 0.2 5.6 0.9 7.4 3.2L4.6 6.6C3.5 7.6 3.6 9 4.6 10L1.4 8.2C0.4 5 0.6 2.3 2.2 1.2Z" fill="#0a78c8"/>
<path d="M7.4 3.2C9.6 3.6 12.6 5.4 13.9 7.4C14.5 8.4 14 9.4 12.8 10.2L9.2 12.2L8.6 9.6C9.6 8.4 9.4 6.8 8.2 6.2L4.6 6.6Z" fill="#8cc81e"/>
<path d="M1.4 8.2L4.6 10C5.6 10.9 7.4 10.8 8.6 9.6L9.2 12.2C6.6 14.2 4.4 15.2 2.8 14.6C1.4 14 1 11.6 1.4 8.2Z" fill="#0a9a7c"/>
<circle cx="6.6" cy="8.1" r="2.7" fill="#f4f4f4"/><circle cx="6.6" cy="8.1" r="1.1" fill="#b4b4b4"/>
</svg>
<span class="t" style="top:422px;letter-spacing:-0.170px;left:718.3px;color:#000;">Bevestiging</span>
<svg class="b" style="left:1100px;top:420px" width="120" height="20" viewBox="1100 420 120 20"><g stroke="#1a1a1a" stroke-width="1" fill="none"><path d="M1106 429.5H1116"/><rect x="1154.5" y="424.5" width="9" height="9"/><path d="M1202.3 424.3L1211.9 433.9M1211.9 424.3L1202.3 433.9" stroke-width="1.1"/></g></svg>
<svg class="b" style="left:711px;top:463px" width="33" height="33" viewBox="-16.5 -16.5 33 33">
<defs><radialGradient id="qg" cx="0.62" cy="0.3" r="0.85"><stop offset="0" stop-color="#3858c6"/><stop offset="0.55" stop-color="#1c38a6"/><stop offset="1" stop-color="#0b186a"/></radialGradient></defs>
<circle r="15" fill="#b8b8b8" opacity="0.55"/><circle r="14.9" fill="none" stroke="#7c7c84" stroke-width="1" stroke-dasharray="1.1 1.3" opacity="0.8"/><circle r="14.2" fill="url(#qg)"/>
<path d="M-5.2 -4.6C-5 -8.2 -2.6 -9.8 0.4 -9.8C3.8 -9.8 6 -7.9 6 -5.2C6 -2.8 4.6 -1.6 3 -0.4C1.8 0.5 1.5 1.4 1.5 3.2H-2.2C-2.3 0.6 -1.6 -0.8 -0.2 -1.9C1 -2.9 1.9 -3.6 1.9 -4.9C1.9 -6.1 1.2 -6.8 0 -6.8C-1.4 -6.8 -2.1 -5.9 -2.2 -4.3Z" fill="#fff"/>
<rect x="-2.4" y="5.2" width="4" height="3.9" fill="#f4f4f4"/>
</svg>
<span class="t" style="top:457px;letter-spacing:-0.037px;left:760.2px;">Bent u zeker dat u dit actiefelement buiten gebruik wil stellen?  Zo ja, gelieve aan te geven tot</span>
<span class="t" style="top:470px;letter-spacing:-0.066px;left:760.2px;">welke datum de afschrijvingen berekend moeten worden.</span>
<div class="b" style="left:927px;top:537px;width:107px;height:22px;background:#fff;border:2px solid #42639f"></div>
<div class="b" style="left:929px;top:539px;width:103px;height:18px;border:1px dotted #000"></div>
<span class="t" style="top:541px;letter-spacing:0.017px;left:934.4px;">Tot begin boekjaar</span>
<div class="b" style="left:1040px;top:537px;width:134px;height:22px;background:#fff;border:1px solid #8f8f8f"></div>
<span class="t" style="top:541px;letter-spacing:-0.024px;left:1047.5px;">Tot buitengebruikstelling</span>
<div class="b" style="left:1180px;top:537px;width:42px;height:22px;background:#fff;border:1px solid #8f8f8f"></div>
<span class="t" style="top:541px;letter-spacing:-0.149px;left:1187.2px;">Neen</span>
</body></html>
